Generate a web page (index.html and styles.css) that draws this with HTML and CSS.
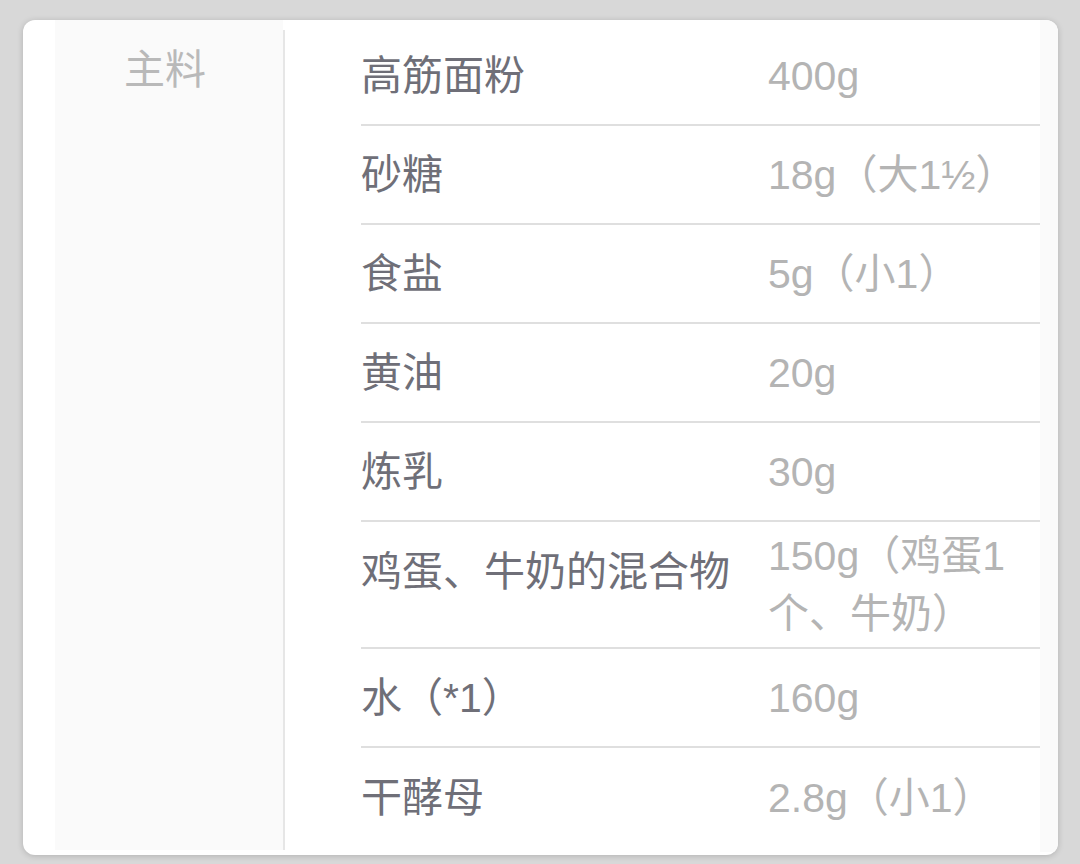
FILE: index.html
```html
<!DOCTYPE html>
<html lang="zh-CN">
<head>
<meta charset="utf-8">
<title>主料</title>
<link rel="stylesheet" href="styles.css">
</head>
<body>
<div class="card">
  <div class="side"><span class="side-label">主料</span></div>
  <div class="divider"></div>
  <div class="main">
    <div class="list">
      <div class="row"><div class="name">高筋面粉</div><div class="value">400g</div></div>
      <div class="row"><div class="name">砂糖</div><div class="value">18g（大1½）</div></div>
      <div class="row"><div class="name">食盐</div><div class="value">5g（小1）</div></div>
      <div class="row"><div class="name">黄油</div><div class="value">20g</div></div>
      <div class="row"><div class="name">炼乳</div><div class="value">30g</div></div>
      <div class="row row-tall"><div class="name">鸡蛋、牛奶的混合物</div><div class="value">150g（鸡蛋1个、牛奶）</div></div>
      <div class="row"><div class="name">水（*1）</div><div class="value">160g</div></div>
      <div class="row row-last"><div class="name">干酵母</div><div class="value">2.8g（小1）</div></div>
    </div>
    <div class="gutter"></div>
  </div>
</div>
</body>
</html>
```

FILE: styles.css
```css
html, body {
  margin: 0;
  padding: 0;
}

body {
  background: #d8d8d8;
  width: 1080px;
  height: 864px;
  overflow: hidden;
  padding: 20px 0 0 23px;
  box-sizing: border-box;
  font-family: "Liberation Sans", "Noto Sans CJK SC", sans-serif;
  font-size: 41px;
  line-height: 58px;
}

.card {
  width: 1035px;
  height: 835px;
  background: #ffffff;
  border-radius: 12px;
  box-shadow: 0 1px 6px rgba(0, 0, 0, 0.18);
  display: flex;
  padding-left: 32px;
  box-sizing: border-box;
  overflow: hidden;
}

.side {
  width: 228px;
  flex: none;
  background: #fafafa;
  margin-bottom: 5px;
  padding: 21px 0 0 69px;
  box-sizing: border-box;
}

.side-label {
  color: #b9b9b9;
}

.divider {
  width: 2px;
  flex: none;
  background: #e6e6e6;
  margin: 10px 0 5px;
}

.main {
  flex: 1;
  display: flex;
  padding-left: 76px;
}

.list {
  width: 679px;
  flex: none;
  padding-top: 7px;
}

.gutter {
  flex: 1;
  background: #fafafa;
  margin-bottom: 3px;
}

.row {
  display: grid;
  grid-template-columns: 407px 1fr;
  align-items: center;
  min-height: 99px;
  box-sizing: border-box;
  padding: 5px 0;
  border-bottom: 2px solid #dfdfdf;
}

.row-tall {
  min-height: 127px;
  padding: 4px 0;
}

.row-last {
  border-bottom: none;
}

.name {
  color: #6f6f78;
  white-space: nowrap;
}

.value {
  color: #b4b4b4;
  line-break: anywhere;
}

.row-tall .name {
  align-self: start;
  padding-top: 17px;
}
```
